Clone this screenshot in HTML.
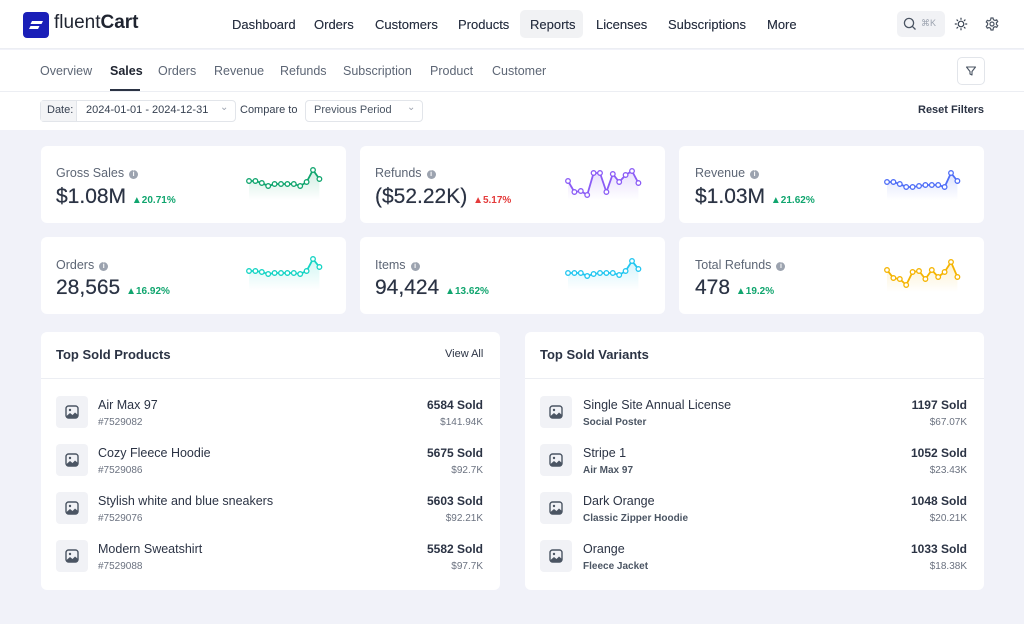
<!DOCTYPE html>
<html><head><meta charset="utf-8"><style>
*{box-sizing:border-box;margin:0;padding:0}
body{width:1024px;height:624px;overflow:hidden;background:#f1f2f9;font-family:"Liberation Sans",sans-serif;color:#2b3344;position:relative}
.a{position:absolute;white-space:nowrap}
.top{position:absolute;left:0;top:0;width:1024px;height:49px;background:#fff;border-bottom:1px solid #eceef3}
.sub{position:absolute;left:0;top:50px;width:1024px;height:42px;background:#fff;border-bottom:1px solid #eceef3}
.fil{position:absolute;left:0;top:92px;width:1024px;height:38px;background:#fff}
.nav{font-size:13px;color:#2b3344;top:17px;text-shadow:0 0 .3px #2b3344}
.tab{font-size:12.5px;color:#5d6675;top:64px}
.card{position:absolute;background:#fff;border-radius:6px}
.lbl{font-size:12.5px;color:#5d6675}
.val{font-size:21px;color:#2b3344;text-shadow:0 0 .4px #2b3344}
.up{font-size:10px;font-weight:bold;color:#10a56e;text-shadow:none}
.dn{font-size:10px;font-weight:bold;color:#e43b3b;text-shadow:none}
.i{display:inline-block;width:9px;height:9px;border-radius:50%;background:#9ca3af;color:#fff;font-size:7px;text-align:center;line-height:9px;font-weight:bold;vertical-align:1px;margin-left:5px}
.ph{position:absolute;width:32px;height:32px;background:#f1f2f6;border-radius:4px}
.ph svg{position:absolute;left:9px;top:9px}
.nm{font-size:12.5px;color:#2b3344}
.sk{font-size:10px;color:#6b7280}
.sk2{font-size:10px;color:#4b5563;font-weight:bold}
.sd{font-size:12px;font-weight:bold;color:#2b3344}
.pr{font-size:10px;color:#6b7280}
</style></head><body>
<div class="top"></div><div class="sub"></div><div class="fil"></div>
<div class="a" style="left:23px;top:12px;width:26px;height:26px;background:#1a1fb8;border-radius:4px"></div>
<svg class="a" style="left:23px;top:12px" width="26" height="26"><path d="M9 9h11l-1.5 3H7.5z M7.5 14h9l-1.5 3H6z" fill="#fff"/></svg>
<div class="a" style="left:54px;top:12px;font-size:19px;color:#1f2430">fluent<b style="font-weight:600">Cart</b></div>
<div class="a nav" style="left:232px">Dashboard</div>
<div class="a nav" style="left:314px">Orders</div>
<div class="a nav" style="left:375px">Customers</div>
<div class="a nav" style="left:458px">Products</div>
<div class="a" style="left:520px;top:10px;width:63px;height:28px;background:#f1f2f4;border-radius:5px"></div>
<div class="a nav" style="left:530px">Reports</div>
<div class="a nav" style="left:596px">Licenses</div>
<div class="a nav" style="left:668px">Subscriptions</div>
<div class="a nav" style="left:767px">More</div>
<div class="a" style="left:897px;top:11px;width:48px;height:26px;background:#f1f2f5;border-radius:5px"></div>
<svg class="a" style="left:903px;top:17px" width="14" height="14"><circle cx="6" cy="6" r="4.6" fill="none" stroke="#4b5563" stroke-width="1.3"/><path d="M9.4 9.4L12.5 12.5" stroke="#4b5563" stroke-width="1.3"/></svg>
<div class="a" style="left:921px;top:18px;font-size:9px;color:#9ca3af">⌘K</div>
<svg class="a" style="left:954px;top:17px" width="14" height="14" stroke="#374151" stroke-width="1.2" fill="none"><circle cx="7" cy="7" r="2.8"/><path d="M7 0.8v2M7 11.2v2M0.8 7h2M11.2 7h2M2.6 2.6l1.4 1.4M10 10l1.4 1.4M2.6 11.4l1.4-1.4M10 4l1.4-1.4"/></svg>
<svg class="a" style="left:985px;top:17px" width="14" height="14" stroke="#4b5563" stroke-width="1.2" fill="none"><circle cx="7" cy="7" r="2"/><path d="M6 1h2l.5 1.7 1.5.8 1.7-.6 1 1.7-1.3 1.2v1.6l1.3 1.2-1 1.7-1.7-.6-1.5.8L8 13H6l-.5-1.7-1.5-.8-1.7.6-1-1.7L2.6 7.8V6.2L1.3 5l1-1.7 1.7.6 1.5-.8z"/></svg>

<div class="a tab" style="left:40px">Overview</div>
<div class="a tab" style="left:110px;color:#1f2430;font-weight:600">Sales</div>
<div class="a" style="left:110px;top:89px;width:30px;height:2px;background:#2b3344"></div>
<div class="a tab" style="left:158px">Orders</div>
<div class="a tab" style="left:214px">Revenue</div>
<div class="a tab" style="left:280px">Refunds</div>
<div class="a tab" style="left:343px">Subscription</div>
<div class="a tab" style="left:430px">Product</div>
<div class="a tab" style="left:492px">Customer</div>
<div class="a" style="left:957px;top:57px;width:28px;height:28px;border:1px solid #e2e5ea;border-radius:5px"></div>
<svg class="a" style="left:965px;top:65px" width="12" height="12"><path d="M1.5 2h9L7 6.5v3.5L5 9V6.5z" fill="none" stroke="#4b5563" stroke-width="1.1" stroke-linejoin="round"/></svg>

<div class="a" style="left:40px;top:100px;width:196px;height:22px;border:1px solid #e2e5ea;border-radius:4px;background:#fff"></div>
<div class="a" style="left:41px;top:101px;width:36px;height:20px;background:#f3f4f6;border-right:1px solid #e2e5ea"></div>
<div class="a" style="left:47px;top:104px;font-size:11px;color:#374151">Date:</div>
<div class="a" style="left:86px;top:104px;font-size:11px;color:#374151">2024-01-01 - 2024-12-31</div>
<div class="a" style="left:220px;top:102px;font-size:10px;color:#9ca3af">⌄</div>
<div class="a" style="left:240px;top:104px;font-size:11px;color:#374151">Compare to</div>
<div class="a" style="left:305px;top:100px;width:118px;height:22px;border:1px solid #e2e5ea;border-radius:4px"></div>
<div class="a" style="left:314px;top:104px;font-size:11px;color:#4b5563">Previous Period</div>
<div class="a" style="left:407px;top:102px;font-size:10px;color:#9ca3af">⌄</div>
<div class="a" style="left:918px;top:104px;font-size:11px;font-weight:bold;color:#2b3344">Reset Filters</div>

<div class="card" style="left:41px;top:146px;width:305px;height:77px"></div>
<div class="card" style="left:360px;top:146px;width:305px;height:77px"></div>
<div class="card" style="left:679px;top:146px;width:305px;height:77px"></div>
<div class="card" style="left:41px;top:237px;width:305px;height:77px"></div>
<div class="card" style="left:360px;top:237px;width:305px;height:77px"></div>
<div class="card" style="left:679px;top:237px;width:305px;height:77px"></div>

<div class="a lbl" style="left:56px;top:166px">Gross Sales<span class="i">i</span></div>
<div class="a val" style="left:56px;top:185px">$1.08M <span class="up">▲20.71%</span></div>
<div class="a lbl" style="left:375px;top:166px">Refunds<span class="i">i</span></div>
<div class="a val" style="left:375px;top:185px">($52.22K) <span class="dn">▲5.17%</span></div>
<div class="a lbl" style="left:695px;top:166px">Revenue<span class="i">i</span></div>
<div class="a val" style="left:695px;top:185px">$1.03M <span class="up">▲21.62%</span></div>
<div class="a lbl" style="left:56px;top:258px">Orders<span class="i">i</span></div>
<div class="a val" style="left:56px;top:276px">28,565 <span class="up">▲16.92%</span></div>
<div class="a lbl" style="left:375px;top:258px">Items<span class="i">i</span></div>
<div class="a val" style="left:375px;top:276px">94,424 <span class="up">▲13.62%</span></div>
<div class="a lbl" style="left:695px;top:258px">Total Refunds<span class="i">i</span></div>
<div class="a val" style="left:695px;top:276px">478 <span class="up">▲19.2%</span></div>

<svg class="a" style="left:0;top:0" width="1024" height="624" fill="none" stroke-width="1.8">
<defs>
<linearGradient id="g1" x1="0" y1="0" x2="0" y2="1"><stop offset="0" stop-color="#10a56e" stop-opacity=".2"/><stop offset="1" stop-color="#10a56e" stop-opacity="0"/></linearGradient>
<linearGradient id="g2" x1="0" y1="0" x2="0" y2="1"><stop offset="0" stop-color="#8b5cf6" stop-opacity=".2"/><stop offset="1" stop-color="#8b5cf6" stop-opacity="0"/></linearGradient>
<linearGradient id="g3" x1="0" y1="0" x2="0" y2="1"><stop offset="0" stop-color="#4f6ef7" stop-opacity=".2"/><stop offset="1" stop-color="#4f6ef7" stop-opacity="0"/></linearGradient>
<linearGradient id="g4" x1="0" y1="0" x2="0" y2="1"><stop offset="0" stop-color="#14d4c4" stop-opacity=".2"/><stop offset="1" stop-color="#14d4c4" stop-opacity="0"/></linearGradient>
<linearGradient id="g5" x1="0" y1="0" x2="0" y2="1"><stop offset="0" stop-color="#22c6f0" stop-opacity=".2"/><stop offset="1" stop-color="#22c6f0" stop-opacity="0"/></linearGradient>
<linearGradient id="g6" x1="0" y1="0" x2="0" y2="1"><stop offset="0" stop-color="#f5b400" stop-opacity=".2"/><stop offset="1" stop-color="#f5b400" stop-opacity="0"/></linearGradient>
</defs>
<g transform="translate(249,0)" stroke="#10a56e">
<path d="M0 181L6.4 181L12.8 183L19.2 186L25.6 184L32 184L38.4 184L44.8 184L51.2 186L57.6 182L64 170L70.4 179V200H0Z" fill="url(#g1)" stroke="none"/>
<polyline points="0,181 6.4,181 12.8,183 19.2,186 25.6,184 32,184 38.4,184 44.8,184 51.2,186 57.6,182 64,170 70.4,179"/>
<g fill="#fff" stroke-width="1.3"><circle cx="0" cy="181" r="2.3"/><circle cx="6.4" cy="181" r="2.3"/><circle cx="12.8" cy="183" r="2.3"/><circle cx="19.2" cy="186" r="2.3"/><circle cx="25.6" cy="184" r="2.3"/><circle cx="32" cy="184" r="2.3"/><circle cx="38.4" cy="184" r="2.3"/><circle cx="44.8" cy="184" r="2.3"/><circle cx="51.2" cy="186" r="2.3"/><circle cx="57.6" cy="182" r="2.3"/><circle cx="64" cy="170" r="2.3"/><circle cx="70.4" cy="179" r="2.3"/></g></g>
<g transform="translate(568,0)" stroke="#8b5cf6">
<path d="M0 181L6.4 192L12.8 191L19.2 195L25.6 173L32 173L38.4 192L44.8 174L51.2 182L57.6 175L64 171L70.4 183V200H0Z" fill="url(#g2)" stroke="none"/>
<polyline points="0,181 6.4,192 12.8,191 19.2,195 25.6,173 32,173 38.4,192 44.8,174 51.2,182 57.6,175 64,171 70.4,183"/>
<g fill="#fff" stroke-width="1.3"><circle cx="0" cy="181" r="2.3"/><circle cx="6.4" cy="192" r="2.3"/><circle cx="12.8" cy="191" r="2.3"/><circle cx="19.2" cy="195" r="2.3"/><circle cx="25.6" cy="173" r="2.3"/><circle cx="32" cy="173" r="2.3"/><circle cx="38.4" cy="192" r="2.3"/><circle cx="44.8" cy="174" r="2.3"/><circle cx="51.2" cy="182" r="2.3"/><circle cx="57.6" cy="175" r="2.3"/><circle cx="64" cy="171" r="2.3"/><circle cx="70.4" cy="183" r="2.3"/></g></g>
<g transform="translate(887,0)" stroke="#4f6ef7">
<path d="M0 182L6.4 182L12.8 184L19.2 187L25.6 187L32 186L38.4 185L44.8 185L51.2 185L57.6 187L64 173L70.4 181V200H0Z" fill="url(#g3)" stroke="none"/>
<polyline points="0,182 6.4,182 12.8,184 19.2,187 25.6,187 32,186 38.4,185 44.8,185 51.2,185 57.6,187 64,173 70.4,181"/>
<g fill="#fff" stroke-width="1.3"><circle cx="0" cy="182" r="2.3"/><circle cx="6.4" cy="182" r="2.3"/><circle cx="12.8" cy="184" r="2.3"/><circle cx="19.2" cy="187" r="2.3"/><circle cx="25.6" cy="187" r="2.3"/><circle cx="32" cy="186" r="2.3"/><circle cx="38.4" cy="185" r="2.3"/><circle cx="44.8" cy="185" r="2.3"/><circle cx="51.2" cy="185" r="2.3"/><circle cx="57.6" cy="187" r="2.3"/><circle cx="64" cy="173" r="2.3"/><circle cx="70.4" cy="181" r="2.3"/></g></g>
<g transform="translate(249,0)" stroke="#14d4c4">
<path d="M0 271L6.4 271L12.8 272L19.2 274L25.6 273L32 273L38.4 273L44.8 273L51.2 274L57.6 271L64 259L70.4 267V290H0Z" fill="url(#g4)" stroke="none"/>
<polyline points="0,271 6.4,271 12.8,272 19.2,274 25.6,273 32,273 38.4,273 44.8,273 51.2,274 57.6,271 64,259 70.4,267"/>
<g fill="#fff" stroke-width="1.3"><circle cx="0" cy="271" r="2.3"/><circle cx="6.4" cy="271" r="2.3"/><circle cx="12.8" cy="272" r="2.3"/><circle cx="19.2" cy="274" r="2.3"/><circle cx="25.6" cy="273" r="2.3"/><circle cx="32" cy="273" r="2.3"/><circle cx="38.4" cy="273" r="2.3"/><circle cx="44.8" cy="273" r="2.3"/><circle cx="51.2" cy="274" r="2.3"/><circle cx="57.6" cy="271" r="2.3"/><circle cx="64" cy="259" r="2.3"/><circle cx="70.4" cy="267" r="2.3"/></g></g>
<g transform="translate(568,0)" stroke="#22c6f0">
<path d="M0 273L6.4 273L12.8 273L19.2 276L25.6 274L32 273L38.4 273L44.8 273L51.2 275L57.6 271L64 261L70.4 269V290H0Z" fill="url(#g5)" stroke="none"/>
<polyline points="0,273 6.4,273 12.8,273 19.2,276 25.6,274 32,273 38.4,273 44.8,273 51.2,275 57.6,271 64,261 70.4,269"/>
<g fill="#fff" stroke-width="1.3"><circle cx="0" cy="273" r="2.3"/><circle cx="6.4" cy="273" r="2.3"/><circle cx="12.8" cy="273" r="2.3"/><circle cx="19.2" cy="276" r="2.3"/><circle cx="25.6" cy="274" r="2.3"/><circle cx="32" cy="273" r="2.3"/><circle cx="38.4" cy="273" r="2.3"/><circle cx="44.8" cy="273" r="2.3"/><circle cx="51.2" cy="275" r="2.3"/><circle cx="57.6" cy="271" r="2.3"/><circle cx="64" cy="261" r="2.3"/><circle cx="70.4" cy="269" r="2.3"/></g></g>
<g transform="translate(887,0)" stroke="#f5b400">
<path d="M0 270L6.4 278L12.8 279L19.2 285L25.6 272L32 271L38.4 279L44.8 270L51.2 277L57.6 272L64 262L70.4 277V292H0Z" fill="url(#g6)" stroke="none"/>
<polyline points="0,270 6.4,278 12.8,279 19.2,285 25.6,272 32,271 38.4,279 44.8,270 51.2,277 57.6,272 64,262 70.4,277"/>
<g fill="#fff" stroke-width="1.3"><circle cx="0" cy="270" r="2.3"/><circle cx="6.4" cy="278" r="2.3"/><circle cx="12.8" cy="279" r="2.3"/><circle cx="19.2" cy="285" r="2.3"/><circle cx="25.6" cy="272" r="2.3"/><circle cx="32" cy="271" r="2.3"/><circle cx="38.4" cy="279" r="2.3"/><circle cx="44.8" cy="270" r="2.3"/><circle cx="51.2" cy="277" r="2.3"/><circle cx="57.6" cy="272" r="2.3"/><circle cx="64" cy="262" r="2.3"/><circle cx="70.4" cy="277" r="2.3"/></g></g>
</svg>

<div class="card" style="left:41px;top:332px;width:459px;height:258px"></div>
<div class="card" style="left:525px;top:332px;width:459px;height:258px"></div>
<div class="a" style="left:41px;top:378px;width:459px;height:1px;background:#eceef3"></div>
<div class="a" style="left:525px;top:378px;width:459px;height:1px;background:#eceef3"></div>
<div class="a" style="left:56px;top:347px;font-size:13px;font-weight:600;color:#2b3344">Top Sold Products</div>
<div class="a" style="left:445px;top:348px;font-size:11px;color:#2b3344">View All</div>
<div class="a" style="left:540px;top:347px;font-size:13px;font-weight:600;color:#2b3344">Top Sold Variants</div>

<div class="ph" style="left:56px;top:396px"><svg width="14" height="14"><rect x="1" y="1" width="12" height="12" rx="2.5" fill="none" stroke="#4b5563" stroke-width="1.4"/><circle cx="5" cy="5" r="1.2" fill="#4b5563"/><path d="M1.5 11L5 8l2.5 2 2.5-2.5 3 2.5V12.5H1.5z" fill="#4b5563"/></svg></div><div class="a nm" style="left:98px;top:398px">Air Max 97</div><div class="a sk" style="left:98px;top:417px">#7529082</div><div class="a sd" style="right:541px;top:398px">6584 Sold</div><div class="a pr" style="right:541px;top:417px">$141.94K</div>
<div class="ph" style="left:56px;top:444px"><svg width="14" height="14"><rect x="1" y="1" width="12" height="12" rx="2.5" fill="none" stroke="#4b5563" stroke-width="1.4"/><circle cx="5" cy="5" r="1.2" fill="#4b5563"/><path d="M1.5 11L5 8l2.5 2 2.5-2.5 3 2.5V12.5H1.5z" fill="#4b5563"/></svg></div><div class="a nm" style="left:98px;top:446px">Cozy Fleece Hoodie</div><div class="a sk" style="left:98px;top:465px">#7529086</div><div class="a sd" style="right:541px;top:446px">5675 Sold</div><div class="a pr" style="right:541px;top:465px">$92.7K</div>
<div class="ph" style="left:56px;top:492px"><svg width="14" height="14"><rect x="1" y="1" width="12" height="12" rx="2.5" fill="none" stroke="#4b5563" stroke-width="1.4"/><circle cx="5" cy="5" r="1.2" fill="#4b5563"/><path d="M1.5 11L5 8l2.5 2 2.5-2.5 3 2.5V12.5H1.5z" fill="#4b5563"/></svg></div><div class="a nm" style="left:98px;top:494px">Stylish white and blue sneakers</div><div class="a sk" style="left:98px;top:513px">#7529076</div><div class="a sd" style="right:541px;top:494px">5603 Sold</div><div class="a pr" style="right:541px;top:513px">$92.21K</div>
<div class="ph" style="left:56px;top:540px"><svg width="14" height="14"><rect x="1" y="1" width="12" height="12" rx="2.5" fill="none" stroke="#4b5563" stroke-width="1.4"/><circle cx="5" cy="5" r="1.2" fill="#4b5563"/><path d="M1.5 11L5 8l2.5 2 2.5-2.5 3 2.5V12.5H1.5z" fill="#4b5563"/></svg></div><div class="a nm" style="left:98px;top:542px">Modern Sweatshirt</div><div class="a sk" style="left:98px;top:561px">#7529088</div><div class="a sd" style="right:541px;top:542px">5582 Sold</div><div class="a pr" style="right:541px;top:561px">$97.7K</div>

<div class="ph" style="left:540px;top:396px"><svg width="14" height="14"><rect x="1" y="1" width="12" height="12" rx="2.5" fill="none" stroke="#4b5563" stroke-width="1.4"/><circle cx="5" cy="5" r="1.2" fill="#4b5563"/><path d="M1.5 11L5 8l2.5 2 2.5-2.5 3 2.5V12.5H1.5z" fill="#4b5563"/></svg></div><div class="a nm" style="left:583px;top:398px">Single Site Annual License</div><div class="a sk2" style="left:583px;top:417px">Social Poster</div><div class="a sd" style="right:57px;top:398px">1197 Sold</div><div class="a pr" style="right:57px;top:417px">$67.07K</div>
<div class="ph" style="left:540px;top:444px"><svg width="14" height="14"><rect x="1" y="1" width="12" height="12" rx="2.5" fill="none" stroke="#4b5563" stroke-width="1.4"/><circle cx="5" cy="5" r="1.2" fill="#4b5563"/><path d="M1.5 11L5 8l2.5 2 2.5-2.5 3 2.5V12.5H1.5z" fill="#4b5563"/></svg></div><div class="a nm" style="left:583px;top:446px">Stripe 1</div><div class="a sk2" style="left:583px;top:465px">Air Max 97</div><div class="a sd" style="right:57px;top:446px">1052 Sold</div><div class="a pr" style="right:57px;top:465px">$23.43K</div>
<div class="ph" style="left:540px;top:492px"><svg width="14" height="14"><rect x="1" y="1" width="12" height="12" rx="2.5" fill="none" stroke="#4b5563" stroke-width="1.4"/><circle cx="5" cy="5" r="1.2" fill="#4b5563"/><path d="M1.5 11L5 8l2.5 2 2.5-2.5 3 2.5V12.5H1.5z" fill="#4b5563"/></svg></div><div class="a nm" style="left:583px;top:494px">Dark Orange</div><div class="a sk2" style="left:583px;top:513px">Classic Zipper Hoodie</div><div class="a sd" style="right:57px;top:494px">1048 Sold</div><div class="a pr" style="right:57px;top:513px">$20.21K</div>
<div class="ph" style="left:540px;top:540px"><svg width="14" height="14"><rect x="1" y="1" width="12" height="12" rx="2.5" fill="none" stroke="#4b5563" stroke-width="1.4"/><circle cx="5" cy="5" r="1.2" fill="#4b5563"/><path d="M1.5 11L5 8l2.5 2 2.5-2.5 3 2.5V12.5H1.5z" fill="#4b5563"/></svg></div><div class="a nm" style="left:583px;top:542px">Orange</div><div class="a sk2" style="left:583px;top:561px">Fleece Jacket</div><div class="a sd" style="right:57px;top:542px">1033 Sold</div><div class="a pr" style="right:57px;top:561px">$18.38K</div>
</body></html>
